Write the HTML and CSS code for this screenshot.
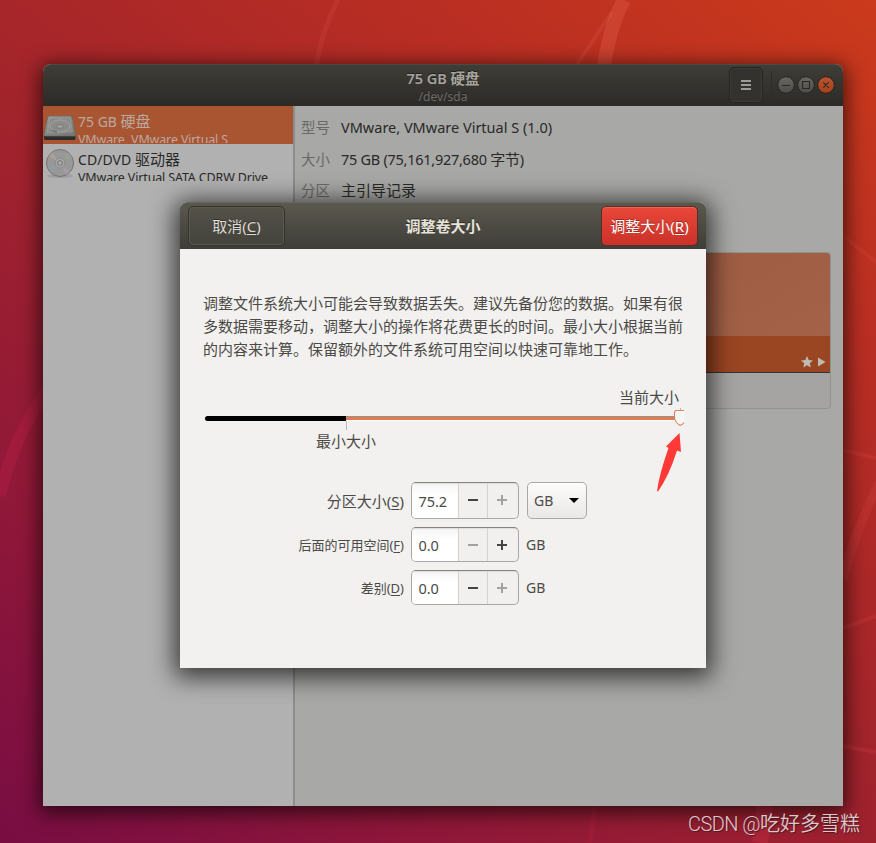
FILE: index.html
```html
<!DOCTYPE html>
<html lang="zh-CN">
<head>
<meta charset="utf-8">
<title>75 GB 硬盘</title>
<link rel="stylesheet" href="styles.css">
</head>
<body>
<div class="desktop">
  <svg class="wallpaper" viewBox="0 0 876 843" fill="none">
    <path d="M338 0Q322 30 316 66" stroke="#ff8070" stroke-opacity=".1" stroke-width="5"/>
    <path d="M624 0Q610 26 604 66" stroke="#ff8070" stroke-opacity=".2" stroke-width="14"/>
    <path d="M612 12L576 66" stroke="#ff8070" stroke-opacity=".12" stroke-width="4"/>
    <path d="M46 392Q12 440 0 496" stroke="#c82050" stroke-opacity=".28" stroke-width="12"/>
    <path d="M843 236L876 262M843 450L876 458M843 628L876 616M843 746L876 752" stroke="#ff6060" stroke-opacity=".13" stroke-width="4"/>
    <path d="M880 482Q855 530 843 580" stroke="#ff6060" stroke-opacity=".13" stroke-width="9"/>
    <path d="M765 806L760 843" stroke="#ff4060" stroke-opacity=".17" stroke-width="16"/>
    <path d="M595 806L590 843" stroke="#ff4060" stroke-opacity=".08" stroke-width="5"/>
  </svg>
  <main class="window">
    <header class="titlebar">
      <div class="titles"><div class="title">75 GB 硬盘</div><div class="subtitle">/dev/sda</div></div>
      <div class="menu-btn"><i></i><i></i><i></i></div>
      <div class="separator"></div>
      <svg class="controls" width="60" height="20" viewBox="0 0 60 20" fill="none">
        <defs>
          <linearGradient id="gray" x2="0" y2="1"><stop stop-color="#686761"/><stop offset="1" stop-color="#4d4c48"/></linearGradient>
          <linearGradient id="orange" x2="0" y2="1"><stop stop-color="#b95432"/><stop offset="1" stop-color="#a94118"/></linearGradient>
        </defs>
        <circle cx="10" cy="10" r="8.3" fill="url(#gray)" stroke="#252420"/>
        <circle cx="30" cy="10" r="8.3" fill="url(#gray)" stroke="#252420"/>
        <circle cx="50" cy="10" r="8.3" fill="url(#orange)" stroke="#252420"/>
        <path d="M6 10.5h8M26.5 6.5h7v7h-7zM47.3 7.3l5.4 5.4m0-5.4l-5.4 5.4" stroke="#292824" stroke-width="1.1"/>
      </svg>
    </header>
    <div class="content">
      <aside class="sidebar">
        <div class="device selected">
          <svg class="device-icon" width="34" height="38" viewBox="0 0 34 38">
            <defs><linearGradient id="drive" x2="1" y2="1"><stop stop-color="#9a9a98"/><stop offset="1" stop-color="#747473"/></linearGradient></defs>
            <path d="M5 10h24l3.500 19v3q0 2-1 2H2.500q-1.500 0-1.500-2v-3z" fill="#2c2c2c"/>
            <path d="M6 10h22q1 0 1.300 1.500L32.500 29q0 1-1 1H2q-1 0-1-1L4.700 11.500Q5 10 6 10z" fill="url(#drive)" stroke="#6e6e6d" stroke-width=".7"/>
            <path d="M7 12h20l2.500 14H4.500z" fill="#898988" stroke="#a3a3a1" stroke-width=".6"/>
            <ellipse cx="17" cy="20" rx="10" ry="6" fill="#8b8b89" stroke="#a7a7a4" stroke-width=".8"/>
            <ellipse cx="17" cy="20.500" rx="3.400" ry="1.800" fill="#a3a3a1" stroke="#6b6b69" stroke-width=".7"/>
            <path d="M9 24.500l5 1.500" stroke="#636362" stroke-width="1"/>
          </svg>
          <div class="device-text"><div>75 GB <span class="cjk">硬盘</span></div><div class="detail">VMware, VMware Virtual S</div></div>
        </div>
        <div class="device">
          <svg class="device-icon" width="34" height="38" viewBox="0 0 34 38">
            <ellipse cx="17" cy="32" rx="13" ry="2" fill="#777" opacity=".3"/>
            <circle cx="17" cy="19" r="13.5" fill="#989898" stroke="#747474"/>
            <path d="M17 19L6 12l3-4z" fill="#baa58b" opacity=".6"/><path d="M17 19l10 9-4 3z" fill="#b19fae" opacity=".6"/>
            <path d="M17 19L5 24l3 4z" fill="#87a4a8" opacity=".5"/><path d="M17 19L26 8l3 5z" fill="#91a78c" opacity=".5"/>
            <circle cx="17" cy="19" r="5" fill="#a4a4a4" stroke="#858585" stroke-width=".8"/>
            <circle cx="17" cy="19" r="2.4" fill="#aaa" stroke="#707070" stroke-width=".9"/>
          </svg>
          <div class="device-text"><div class="drive-name">CD/DVD <span class="cjk">驱动器</span></div><div class="detail">VMware Virtual SATA CDRW Drive</div></div>
        </div>
      </aside>
      <section class="details">
        <dl class="facts">
          <dt>型号</dt><dd class="model">VMware, VMware Virtual S (1.0)</dd>
          <dt>大小</dt><dd class="size">75 GB (75,161,927,680 <span class="cjk">字节</span>)</dd>
          <dt>分区</dt><dd class="cjk">主引导记录</dd>
        </dl>
        <div class="volumes">
          <div class="volume-main"></div>
          <div class="volume-band">
            <svg width="26" height="12" viewBox="0 0 26 12" fill="#c0bab6"><path d="M7 0l1.700 4 4.300.4-3.200 2.800 1 4.300L7 9.200l-3.700 2.300 1-4.300L1 4.400 5.300 4zM18 1.500l7.500 4.500-7.500 4.500z"/></svg>
          </div>
          <div class="volume-tools"></div>
        </div>
      </section>
    </div>
  </main>

  <div class="dialog">
    <header class="dialog-bar">
      <button class="btn cancel"><span>取消(<u>C</u>)</span></button>
      <h1>调整卷大小</h1>
      <button class="btn resize"><span>调整大小(<u>R</u>)</span></button>
    </header>
    <p class="message">调整文件系统大小可能会导致数据丢失。建议先备份您的数据。如果有很<br>多数据需要移动，调整大小的操作将花费更长的时间。最小大小根据当前<br>的内容来计算。保留额外的文件系统可用空间以快速可靠地工作。</p>
    <div class="scale">
      <div class="current">当前大小</div>
      <svg class="track" width="481" height="24" viewBox="0 0 481 24">
        <path d="M4.500 10.500H143" stroke="#000" stroke-width="5" stroke-linecap="round"/>
        <path d="M143 8.500H472" stroke="#949390"/>
        <path d="M143 10.500H472" stroke="#e17a50" stroke-width="3"/>
        <path d="M143 12.500H472" stroke="#fff"/>
        <path d="M143.500 13v9M477.500 0v3" stroke="#bbb9b5"/>
        <path d="M482 2.500H473.500Q471.500 2.500 471.500 5V10Q472 14 477 17.500Q480 16.500 482 13.500" fill="#f8f7f6" stroke="#d78465" stroke-width="1.100"/>
      </svg>
      <div class="minimum">最小大小</div>
    </div>
    <div class="form">
      <label class="main-label">分区大小(<u>S</u>)</label>
      <div class="spin tall"><span class="value">75.2</span><b class="minus"></b><b class="plus off"></b></div>
      <div class="combo"><span>GB</span><i></i></div>
      <label>后面的可用空间(<u>F</u>)</label>
      <div class="spin"><span class="value">0.0</span><b class="minus off"></b><b class="plus"></b></div>
      <span class="unit">GB</span>
      <label>差别(<u>D</u>)</label>
      <div class="spin"><span class="value">0.0</span><b class="minus"></b><b class="plus off"></b></div>
      <span class="unit">GB</span>
    </div>
  </div>
  <svg class="arrow" width="28" height="60" viewBox="0 0 28 60"><path d="M23.500 0L25 19l-4-1.500Q13 43 2 58.500L1 58Q3 42 12.500 15L10 13.500z" fill="#ff3838"/></svg>
  <div class="watermark"><span class="brand">CSDN @</span>吃好多雪糕</div>
</div>
</body>
</html>
```

FILE: styles.css
```css
* { box-sizing: border-box; }
body { margin: 0; font: 15px/23px "Noto Sans", "Noto Sans CJK SC", sans-serif; color: #4b4a47; }
.desktop { position: relative; width: 876px; height: 843px; overflow: hidden; background: linear-gradient(37deg, #780d43 0%, #8f1739 22%, #a2242b 50%, #b92e23 77%, #cb3a1b 100%); }
.wallpaper { position: absolute; inset: 0; }
.window { position: absolute; left: 43px; top: 64px; width: 800px; height: 742px; border-radius: 8px 8px 0 0; background: #a8a8a6; color: #292927; box-shadow: 0 4px 20px 3px rgba(0,0,0,.65); }
.titlebar { height: 42px; display: flex; align-items: center; padding: 0 7px 2px 0; border-radius: 8px 8px 0 0; background: linear-gradient(#3e3d37, #2b2a27); border-top: 1px solid #4b4a43; }
.titles { flex: 1; padding: 2px 0 0 114px; text-align: center; color: #a7a49d; white-space: nowrap; text-shadow: 0 -1px #20201e; }
.title { font-size: 14.500px; line-height: 21px; font-weight: 600; padding-top: 1px; }
.subtitle { font-size: 12px; line-height: 16px; color: #6f6e69; }
.menu-btn { width: 34px; height: 36px; border: 1px solid #24231f; border-radius: 5px; display: grid; align-content: center; justify-content: center; gap: 2px; box-shadow: inset 0 0 0 1px #3d3c37; background: #33322e; }
.menu-btn i { width: 10px; height: 2px; background: #9e9c96; }
.separator { width: 1px; height: 28px; margin: 0 4px 0 8px; background: #2d2c28; }
.content { display: flex; height: 700px; }
.sidebar { width: 252px; border-right: 2px solid #8d8d8b; background: #b1b1b1; }
.device { height: 38px; display: flex; overflow: hidden; color: #292927; }
.selected { background: #a95532; color: #b9aaa1; }
.device-icon { flex: none; }
.device-text { margin-left: 1px; padding-top: 5px; height: 37px; overflow: hidden; white-space: nowrap; font-size: 14px; line-height: 21px; }
.cjk { font-size: 15px; line-height: 1; }
.drive-name { letter-spacing: .05px; }
.detail { font-size: 12.500px; line-height: 15px; letter-spacing: -.15px; }
.details { flex: 1; padding: 6px 12px 0 6px; background: #a8a8a6; }
.facts { margin: 0; display: grid; grid-template-columns: 40px 1fr; grid-template-rows: 31.500px 31.500px 31.500px; font-size: 14.500px; line-height: 31px; white-space: nowrap; }
.facts dt { color: #696967; }
.facts dd { margin: 0; }
.facts dd.cjk { line-height: 31px; }
.size { letter-spacing: -.27px; }
.volumes { margin-top: 45px; height: 157px; border: 1px solid #929290; border-radius: 4px; overflow: hidden; background: #a5a4a2; }
.volume-main { height: 83px; background: linear-gradient(150deg, #96563c, #a46248); }
.volume-band { height: 37px; display: flex; justify-content: flex-end; align-items: flex-end; padding: 0 4px 4px 0; background: #9a4623; border-bottom: 1px solid #333; }
.dialog { position: absolute; left: 180px; top: 202px; width: 526px; height: 466px; border-radius: 7px 7px 0 0; background: #f2f1ef; box-shadow: 0 4px 24px 5px rgba(0,0,0,.7); }
.dialog-bar { height: 47px; padding: 2px 8px 3px; display: flex; justify-content: space-between; align-items: center; border-radius: 7px 7px 0 0; border-top: 1px solid #69665a; background: linear-gradient(#5a584e, #3e3d38); }
.dialog-bar h1 { margin: 0; font-size: 15px; line-height: 22px; color: #e7e3da; text-shadow: 0 -1px #2d2c28; }
.btn { width: 97px; height: 40px; padding: 0; font: 15px/24px "Noto Sans", "Noto Sans CJK SC", sans-serif; color: #dedbd2; border: 1px solid #34332d; border-radius: 5px; background: linear-gradient(#535148, #44433c); box-shadow: inset 0 0 0 1px #5c5a50; text-shadow: 0 -1px #333; white-space: nowrap; }
.btn span { display: inline-block; }
.resize { color: #fff; border-color: #553028; background: linear-gradient(#e94739, #cb3229); box-shadow: inset 0 1px #f26351; text-shadow: 0 -1px #962c24; }
u { text-underline-offset: 2px; text-decoration-thickness: 1px; text-decoration-skip-ink: none; }
.message { margin: 43px 0 0 23px; width: 490px; white-space: nowrap; line-height: 23.200px; }
.scale { margin: 24px 0 0 23px; width: 481px; }
.current { text-align: right; padding-right: 5px; line-height: 23px; }
.track { display: block; margin-top: -1px; }
.minimum { margin: -2px 0 0 113px; line-height: 23px; }
.form { margin: 29px 0 0 100px; display: grid; grid-template-columns: 124px 108px 60px; column-gap: 7.500px; grid-template-rows: 37px 35px 35px; row-gap: 8px; align-items: center; }
.form label { text-align: right; font-size: 13px; white-space: nowrap; padding-top: 2px; }
.form .main-label { font-size: 15px; }
.spin { height: 35px; margin-left: -1px; width: 108px; display: flex; border: 1px solid #aaa8a4; border-top-color: #85837e; border-radius: 5px; overflow: hidden; background: #f1f0ee; box-shadow: inset 0 1px 1px #ddd; }
.tall { height: 37px; }
.value { flex: none; width: 46px; padding: 1px 0 0 7px; line-height: 33px; font-size: 14.500px; letter-spacing: -.1px; background: linear-gradient(#f5f5f5, #fff 35%); box-shadow: inset 0 1px 1px #ddd; }
.tall .value { padding-top: 2px; }
.spin b { flex: none; position: relative; width: 29px; border-left: 1px solid #d5d3cf; }
.spin b::before, .plus::after { content: ""; position: absolute; left: 9px; top: 16px; width: 10px; height: 2px; background: #454441; }
.spin .plus::after { left: 13px; top: 12px; width: 2px; height: 10px; }
.spin .off::before, .spin .off::after { background: #a3a19d; }
.combo { height: 37px; padding: 0 7px 0 6px; display: flex; align-items: center; justify-content: space-between; border: 1px solid #aaa8a4; border-radius: 5px; background: linear-gradient(#fcfcfb, #eae8e6); font-size: 14px; box-shadow: inset 0 1px #fff; }
.combo i { border: 5px solid transparent; border-top-color: #000; border-bottom: 0; }
.unit { font-size: 14px; margin-left: -1px; }
.arrow { position: absolute; left: 656px; top: 433px; }
.watermark { position: absolute; right: 16px; bottom: 4px; font: 20px/30px Roboto, "Noto Sans CJK SC", sans-serif; color: #dcc8ca; text-shadow: 1px 1px 1px #4b1921; white-space: nowrap; }
.watermark { font-weight: 350; }
.brand { letter-spacing: -.55px; }
```
